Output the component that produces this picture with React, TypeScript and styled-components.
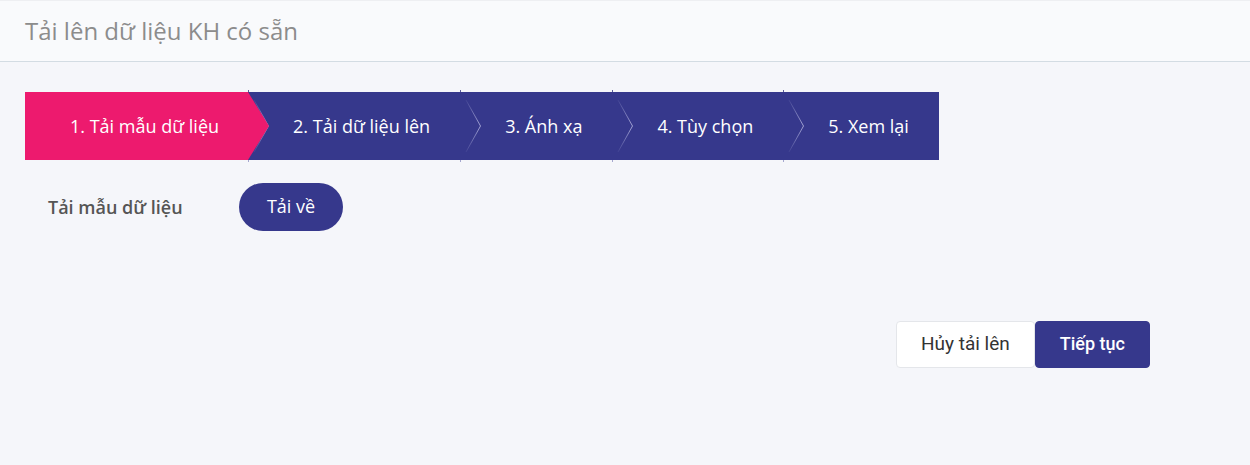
import React from "react";
import styled, { createGlobalStyle } from "styled-components";

const NAVY = "#36388c";
const PINK = "#ed1a6e";

const Global = createGlobalStyle`
  html, body { margin: 0; padding: 0; background: #f5f6fa; }
  body { font-family: "Open Sans", "Noto Sans", sans-serif; }
  * { box-sizing: border-box; }
`;

const Page = styled.div`
  width: 1250px;
  min-height: 465px;
  background: #f5f6fa;
`;

const Header = styled.header`
  height: 62px;
  display: flex;
  align-items: center;
  padding: 0 25px 2px;
  background: #f9fafc;
  border-top: 1px solid #eeeff2;
  border-bottom: 1px solid #d3dce3;
`;

const Title = styled.h1`
  margin: 0;
  font-family: "Open Sans", sans-serif;
  font-size: 24px;
  font-weight: 400;
  color: #8c8c8c;
`;

const Content = styled.main`
  padding: 30px 25px 0;
`;

const Stepper = styled.ol`
  display: flex;
  margin: 0;
  padding: 0;
  list-style: none;
  height: 68px;
`;

const Step = styled.li<{ $active?: boolean }>`
  position: relative;
  display: flex;
  align-items: center;
  height: 68px;
  padding: 0 ${(p) => (p.$active ? 29 : 30)}px 1px 45px;
  background: ${(p) => (p.$active ? PINK : NAVY)};
  color: #ffffff;
  font-family: "Open Sans", sans-serif;
  font-size: 18px;
  white-space: nowrap;
  z-index: ${(p) => (p.$active ? 2 : 1)};

  ${(p) =>
    p.$active
      ? `
  &::after {
    content: "";
    position: absolute;
    top: 0;
    right: -21px;
    width: 0;
    height: 0;
    border-top: 34px solid transparent;
    border-bottom: 34px solid transparent;
    border-left: 21px solid ${PINK};
  }`
      : `
  &::before, &::after {
    content: "";
    position: absolute;
    left: 0;
    width: 1px;
    height: 2px;
  }
  &::before { top: -2px; background: #5a5c98; }
  &::after { bottom: -2px; background: #a5a7cf; }
  `}
`;

const Chevron = styled.svg`
  position: absolute;
  left: 0;
  top: 0;
  width: 24px;
  height: 68px;
  pointer-events: none;
`;

const StepChevron = ({ id }: { id: string }) => (
  <Chevron viewBox="0 0 24 68">
    <defs>
      <linearGradient id={id} x1="0" y1="0" x2="0" y2="68" gradientUnits="userSpaceOnUse">
        <stop offset="0.1" stopColor="#3c3e90" />
        <stop offset="0.5" stopColor="#a3a4d4" />
        <stop offset="0.9" stopColor="#3c3e90" />
      </linearGradient>
    </defs>
    <polyline
      points="6,8 20.5,34 6,60"
      fill="none"
      stroke={`url(#${id})`}
      strokeWidth="1"
    />
  </Chevron>
);

const TemplateRow = styled.div`
  display: flex;
  align-items: center;
  margin-top: 23px;
  padding-left: 23px;
`;

const RowLabel = styled.span`
  width: 191px;
  font-family: "Open Sans", sans-serif;
  font-size: 18px;
  font-weight: 600;
  color: #555555;
`;

const PillButton = styled.button`
  height: 48px;
  width: 104px;
  border: none;
  border-radius: 24px;
  background: ${NAVY};
  color: #ffffff;
  font-family: "Open Sans", sans-serif;
  font-size: 18px;
  padding: 0 0 2px;
  cursor: pointer;
`;

const Actions = styled.div`
  display: flex;
  justify-content: flex-end;
  margin-top: 90px;
  padding-right: 75px;
`;

const ActionButton = styled.button<{ $primary?: boolean }>`
  height: 47px;
  padding: 0 24px 2px;
  border-radius: 4px;
  border: 1px solid ${(p) => (p.$primary ? NAVY : "#e4e6ea")};
  background: ${(p) => (p.$primary ? NAVY : "#ffffff")};
  color: ${(p) => (p.$primary ? "#ffffff" : "#333333")};
  font-family: Roboto, "Noto Sans", sans-serif;
  font-size: ${(p) => (p.$primary ? 18 : 19)}px;
  font-weight: ${(p) => (p.$primary ? 500 : 400)};
  cursor: pointer;
`;

const steps = [
  "1. Tải mẫu dữ liệu",
  "2. Tải dữ liệu lên",
  "3. Ánh xạ",
  "4. Tùy chọn",
  "5. Xem lại",
];

export default function App() {
  return (
    <Page>
      <Global />
      <Header>
        <Title>Tải lên dữ liệu KH có sẵn</Title>
      </Header>
      <Content>
        <Stepper>
          {steps.map((s, i) => (
            <Step key={s} $active={i === 0}>
              {i > 0 && <StepChevron id={`chev-${i}`} />}
              {s}
            </Step>
          ))}
        </Stepper>
        <TemplateRow>
          <RowLabel>Tải mẫu dữ liệu</RowLabel>
          <PillButton>Tải về</PillButton>
        </TemplateRow>
        <Actions>
          <ActionButton>Hủy tải lên</ActionButton>
          <ActionButton $primary>Tiếp tục</ActionButton>
        </Actions>
      </Content>
    </Page>
  );
}
